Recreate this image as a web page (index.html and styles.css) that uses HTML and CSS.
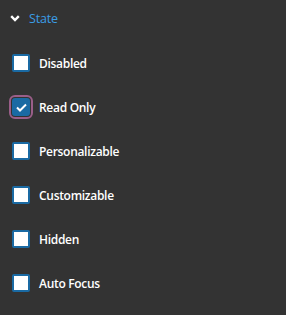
FILE: index.html
```html
<!DOCTYPE html>
<html lang="en">
<head>
  <meta charset="UTF-8">
  <title>State</title>
  <link rel="stylesheet" href="styles.css">
</head>
<body>
  <div class="panel">
    <div class="section-header">
      <svg class="chevron" width="10" height="7" viewBox="0 0 10 7">
        <path d="M1.2 1.2 L5 5 L8.8 1.2" fill="none" stroke="#fff" stroke-width="2.4"/>
      </svg>
      <span class="section-title">State</span>
    </div>

    <ul class="options">
      <li class="option"><span class="box"></span><span class="label">Disabled</span></li>
      <li class="option"><span class="box checked focused">
        <svg width="11" height="9" viewBox="0 0 11 9"><path d="M1 4.5 L4 7.5 L10 1.5" fill="none" stroke="#fff" stroke-width="2"/></svg>
      </span><span class="label">Read Only</span></li>
      <li class="option"><span class="box"></span><span class="label">Personalizable</span></li>
      <li class="option"><span class="box"></span><span class="label">Customizable</span></li>
      <li class="option"><span class="box"></span><span class="label">Hidden</span></li>
      <li class="option"><span class="box"></span><span class="label">Auto Focus</span></li>
    </ul>
  </div>
</body>
</html>
```

FILE: styles.css
```css
* {
  box-sizing: border-box;
  margin: 0;
  padding: 0;
}

body {
  background-color: #333333;
  font-family: 'Open Sans', 'Liberation Sans', sans-serif;
  color: #fff;
}

.panel {
  height: 315px;
}

/* section header */
.section-header {
  display: flex;
  align-items: center;
  height: 37px;
  padding-left: 10px;
}

.chevron {
  margin-right: 9px;
}

.section-title {
  color: #3a9de6;
  font-size: 12.5px;
  letter-spacing: -0.2px;
}

/* checkbox list */
.options {
  list-style: none;
  padding-top: 4px;
}

.option {
  display: flex;
  align-items: center;
  height: 44px;
  padding-left: 12px;
}

.box {
  display: flex;
  align-items: center;
  justify-content: center;
  width: 18px;
  height: 18px;
  background-color: #fff;
  border: 2px solid #1a6aa3;
  border-radius: 2px;
}

.box.checked {
  background-color: #1a6aa3;
}

.box.focused {
  outline: 2px solid #9a5e88;
  outline-offset: 1px;
  border-radius: 3px;
}

.label {
  margin-left: 9px;
  font-size: 12px;
  font-weight: 600;
  letter-spacing: -0.3px;
}
```
